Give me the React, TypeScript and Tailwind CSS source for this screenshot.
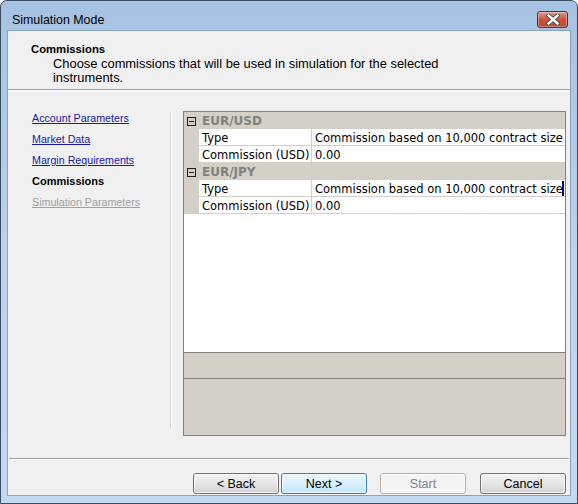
import React from "react";

const sys = "font-['Liberation_Sans',Arial,sans-serif]";
const pg = "font-['DejaVu_Sans',Verdana,sans-serif]";

type Prop = { label: string; value: string; caret?: boolean };
type Group = { name: string; props: Prop[] };

const groups: Group[] = [
  {
    name: "EUR/USD",
    props: [
      { label: "Type", value: "Commission based on 10,000 contract size" },
      { label: "Commission (USD)", value: "0.00" },
    ],
  },
  {
    name: "EUR/JPY",
    props: [
      { label: "Type", value: "Commission based on 10,000 contract size", caret: true },
      { label: "Commission (USD)", value: "0.00" },
    ],
  },
];

const steps = [
  { label: "Account Parameters", kind: "link" },
  { label: "Market Data", kind: "link" },
  { label: "Margin Requirements", kind: "link" },
  { label: "Commissions", kind: "current" },
  { label: "Simulation Parameters", kind: "disabled" },
];

function CloseButton() {
  return (
    <div className="mt-[10px] w-[31px] h-[17px] rounded-[3px] border border-[#5b2b2b] bg-gradient-to-b from-[#e09a8c] via-[#c8523d] to-[#b84a33] flex items-center justify-center shadow-[inset_0_0_0_1px_rgba(255,255,255,0.35)]">
      <svg width="14" height="11" viewBox="0 0 14 11">
        <path d="M2.5 1.5 L11.5 9.5 M11.5 1.5 L2.5 9.5" stroke="#4a4a4a" strokeWidth="4.2" strokeLinecap="square" />
        <path d="M2.5 1.5 L11.5 9.5 M11.5 1.5 L2.5 9.5" stroke="#ffffff" strokeWidth="2.4" strokeLinecap="square" />
      </svg>
    </div>
  );
}

function WizButton({ label, kind }: { label: string; kind: "normal" | "default" | "disabled" }) {
  const look =
    kind === "default"
      ? "border-[#3c7fb1] bg-gradient-to-b from-[#eaf6fd] via-[#d9f0fc] to-[#bee6fd] text-black"
      : kind === "disabled"
      ? "border-[#adb2b5] bg-[#f4f4f4] text-[#838383]"
      : "border-[#707070] bg-gradient-to-b from-[#f2f2f2] via-[#e6e6e6] to-[#d3d3d3] text-black";
  return (
    <div
      className={`w-[86px] h-[21px] rounded-[3px] border ${look} ${sys} text-[12.5px] leading-[20px] text-center shadow-[inset_0_0_0_1px_rgba(255,255,255,0.7)]`}
    >
      {label}
    </div>
  );
}

function CategoryRow({ name }: { name: string }) {
  return (
    <div className="h-[17px] bg-[#d4d0c8] flex items-center">
      <div className="ml-[3px] mt-[1px] w-[9px] h-[9px] border border-[#1e1e1e] flex items-center justify-center">
        <div className="w-[5px] h-[1px] bg-[#1e1e1e]" />
      </div>
      <span className={`ml-[6px] pt-[2px] ${pg} text-[12px] font-bold text-[#808080] leading-[17px]`}>{name}</span>
    </div>
  );
}

function PropRow({ p }: { p: Prop }) {
  return (
    <div className={`h-[17px] flex ${pg} text-[11.5px] leading-[17px] text-black`}>
      <div className="w-[15px] bg-[#d4d0c8]" />
      <div className="w-[113px] bg-white border-r border-b border-[#d4d0c8] pl-[3px] pt-[1px] whitespace-nowrap overflow-hidden">
        {p.label}
      </div>
      <div className="flex-1 bg-white border-b border-[#d4d0c8] pl-[3px] pt-[1px] flex overflow-hidden">
        <span className="flex-1 whitespace-nowrap overflow-hidden">{p.value}</span>
        {p.caret && <span className="w-[2px] h-[15px] mr-[1px] bg-[#000080]" />}
      </div>
    </div>
  );
}

export default function App() {
  return (
    <div className="w-[578px] h-[504px] rounded-t-[7px] border border-[#3b4c60] bg-gradient-to-b from-[#a6c2e3] via-[#bcd2ec] to-[#c4d9f0] flex flex-col overflow-hidden">
      {/* title bar */}
      <div className="h-[29px] flex items-start justify-between pl-[11px] pr-[9px]">
        <span className={`pt-[11px] ${sys} text-[12.4px] leading-[16px] text-black`}>Simulation Mode</span>
        <CloseButton />
      </div>

      {/* client area */}
      <div className="mx-[6px] mb-[7px] flex-1 border border-[#8aa2be] bg-[#f0f0f0] flex flex-col">
        {/* header */}
        <div className="h-[58px] pl-[23px] pt-[10px]">
          <div className={`${sys} text-[11.3px] font-bold leading-[16px] text-black`}>Commissions</div>
          <div className={`pl-[22px] ${sys} text-[12.9px] leading-[14px] text-black`}>
            Choose commissions that will be used in simulation for the selected
            <br />
            instruments.
          </div>
        </div>
        <div className="h-[1px] bg-[#a0a0a0]" />
        <div className="h-[1px] bg-white" />

        {/* body */}
        <div className="h-[367px] flex">
          <div className="w-[162px] pt-[21px] pl-[24px] flex flex-col gap-[8px]">
            {steps.map((s) => (
              <span
                key={s.label}
                className={`${sys} leading-[13px] whitespace-nowrap ${
                  s.kind === "link"
                    ? "text-[10.7px] text-[#1a1aa6] underline underline-offset-[1px]"
                    : s.kind === "current"
                    ? "text-[11px] text-black font-bold"
                    : "text-[10.7px] text-[#a0a0a0] underline underline-offset-[1px]"
                }`}
              >
                {s.label}
              </span>
            ))}
          </div>
          <div className="mt-[21px] h-[316px] w-[2px] border-l border-[#d9d9d9] border-r border-r-white" />

          {/* property grid */}
          <div className="ml-[11px] mt-[20px] w-[383px] h-[325px] border border-[#808080] bg-[#d4d0c8] flex flex-col">
            <div className="h-[241px] bg-white border-b border-[#808080] flex flex-col">
              {groups.map((g) => (
                <div key={g.name}>
                  <CategoryRow name={g.name} />
                  {g.props.map((p) => (
                    <PropRow key={p.label} p={p} />
                  ))}
                </div>
              ))}
            </div>
            <div className="h-[25px]" />
            <div className="flex-1 border-t border-[#808080]" />
          </div>
        </div>

        {/* footer */}
        <div className="mx-[1px] h-[1px] bg-[#a0a0a0]" />
        <div className="mx-[1px] h-[1px] bg-white" />
        <div className="flex-1 flex items-start pt-[13px] pl-[185px]">
          <WizButton label="< Back" kind="normal" />
          <div className="ml-[2px]">
            <WizButton label="Next >" kind="default" />
          </div>
          <div className="ml-[13px]">
            <WizButton label="Start" kind="disabled" />
          </div>
          <div className="ml-[14px]">
            <WizButton label="Cancel" kind="normal" />
          </div>
        </div>
      </div>
    </div>
  );
}
